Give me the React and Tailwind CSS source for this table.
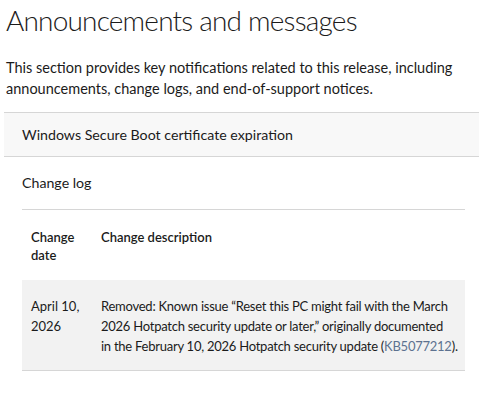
const rows = [
  {
    date: ["April 10,", "2026"],
    lines: [
      "Removed: Known issue \u201cReset this PC might fail with the March",
      "2026 Hotpatch security update or later,\u201d originally documented",
    ],
    last: "in the February 10, 2026 Hotpatch security update (",
    link: "KB5077212",
  },
];

const App = () => {
  return (
    <div className="min-h-[397px] bg-white text-[#1b1b1b] font-['Lato',sans-serif]">
      <h1 className="pl-[6px] pt-[2px] text-[28px] leading-[36px] font-light tracking-[-0.8px]">
        Announcements and messages
      </h1>

      <p className="pl-[6px] pr-4 mt-[19px] text-[14.5px] leading-[21px]">
        This section provides key notifications related to this release, including
        announcements, change logs, and end-of-support notices.
      </p>

      <div className="mt-[13px] ml-[4px] border-y border-[#d6d6d6] bg-[#f8f8f8] h-[45px] flex items-center pl-[18px] text-[14.2px]">
        Windows Secure Boot certificate expiration
      </div>

      <div className="pl-[22px] pr-[14px]">
        <div className="h-[53px] flex items-center text-[14.2px] border-b border-[#d6d6d6]">
          Change log
        </div>

        <table className="w-full table-fixed text-[13px] mt-[18px] border-collapse">
          <thead>
            <tr>
              <th className="w-[79px] pl-[9px] pb-[16px] text-left align-top font-semibold leading-[18px]">
                Change
                <br />
                date
              </th>
              <th className="pb-[16px] text-left align-top font-semibold leading-[18px]">
                Change description
              </th>
            </tr>
          </thead>
          <tbody>
            {rows.map((row) => (
              <tr key={row.link} className="bg-[#f2f2f2] border-b border-[#d6d6d6]">
                <td className="pl-[9px] pt-[16px] pb-[14px] align-top leading-[20px]">
                  {row.date[0]}
                  <br />
                  {row.date[1]}
                </td>
                <td className="pt-[16px] pb-[14px] align-top leading-[20px] whitespace-nowrap tracking-[-0.25px]">
                  {/* fixed line breaks, same as the source page */}
                  {row.lines.map((line) => (
                    <div key={line}>{line}</div>
                  ))}
                  <div>
                    {row.last}
                    <a className="text-[#5d7290]">{row.link}</a>).
                  </div>
                </td>
              </tr>
            ))}
          </tbody>
        </table>
      </div>
    </div>
  );
};

export default App;
